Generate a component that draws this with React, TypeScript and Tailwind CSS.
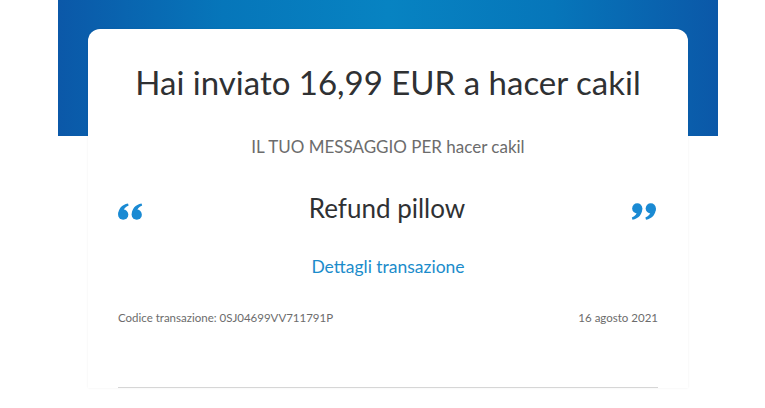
function Quote({ flip }: { flip?: boolean }) {
  return (
    <svg
      width="25"
      height="17"
      viewBox="0 0 24 16"
      className={flip ? 'rotate-180' : ''}
      fill="#1a8ad3"
    >
      <circle cx="5" cy="11" r="4.9" />
      <path d="M0.2 11 C0.2 5.2 3.6 1.5 9.6 0.2 L10.2 2.3 C6.8 3.5 5.2 5.8 5.2 8.4 Z" />
      <circle cx="18" cy="11" r="4.9" />
      <path d="M13.2 11 C13.2 5.2 16.6 1.5 22.6 0.2 L23.2 2.3 C19.8 3.5 18.2 5.8 18.2 8.4 Z" />
    </svg>
  );
}

export default function App() {
  return (
    <div className="min-h-screen w-[765px] bg-white font-['Lato','Open_Sans',sans-serif]">
      <div className="ml-[58px] w-[660px] px-[30px] pt-[29px] bg-no-repeat bg-[length:100%_136px] bg-[linear-gradient(90deg,#0b58a8_0%,#0676ba_25%,#0783c2_50%,#0676ba_75%,#0b58a8_100%)]">
        <div className="bg-white rounded-t-[12px] shadow-[0_0_2px_rgba(0,0,0,0.08)] px-[30px] pt-[33px]">
          <h1 className="text-center text-[33px] leading-[40px] text-[#2f3133]">
            Hai inviato 16,99 EUR a hacer cakil
          </h1>
          <p className="mt-[35px] text-center text-[17px] leading-[20px] text-[#6c6c6c]">
            IL TUO MESSAGGIO PER hacer cakil
          </p>
          <div className="mt-[31px] flex items-center justify-between h-[40px]">
            <div className="pt-[6px]">
              <Quote />
            </div>
            <span className="text-[26px] text-[#2f3133]">Refund pillow</span>
            <div className="pt-[6px] pr-[2px]">
              <Quote flip />
            </div>
          </div>
          <div className="mt-[29px] text-center text-[17.5px] leading-[20px] text-[#1b8ccb]">
            Dettagli transazione
          </div>
          <div className="mt-[33px] flex justify-between text-[11.5px] leading-[16px] text-[#6c6c6c]">
            <span>Codice transazione: 0SJ04699VV711791P</span>
            <span>16 agosto 2021</span>
          </div>
          <div className="mt-[61px] border-t border-[#d6d6d6]" />
        </div>
      </div>
    </div>
  );
}
